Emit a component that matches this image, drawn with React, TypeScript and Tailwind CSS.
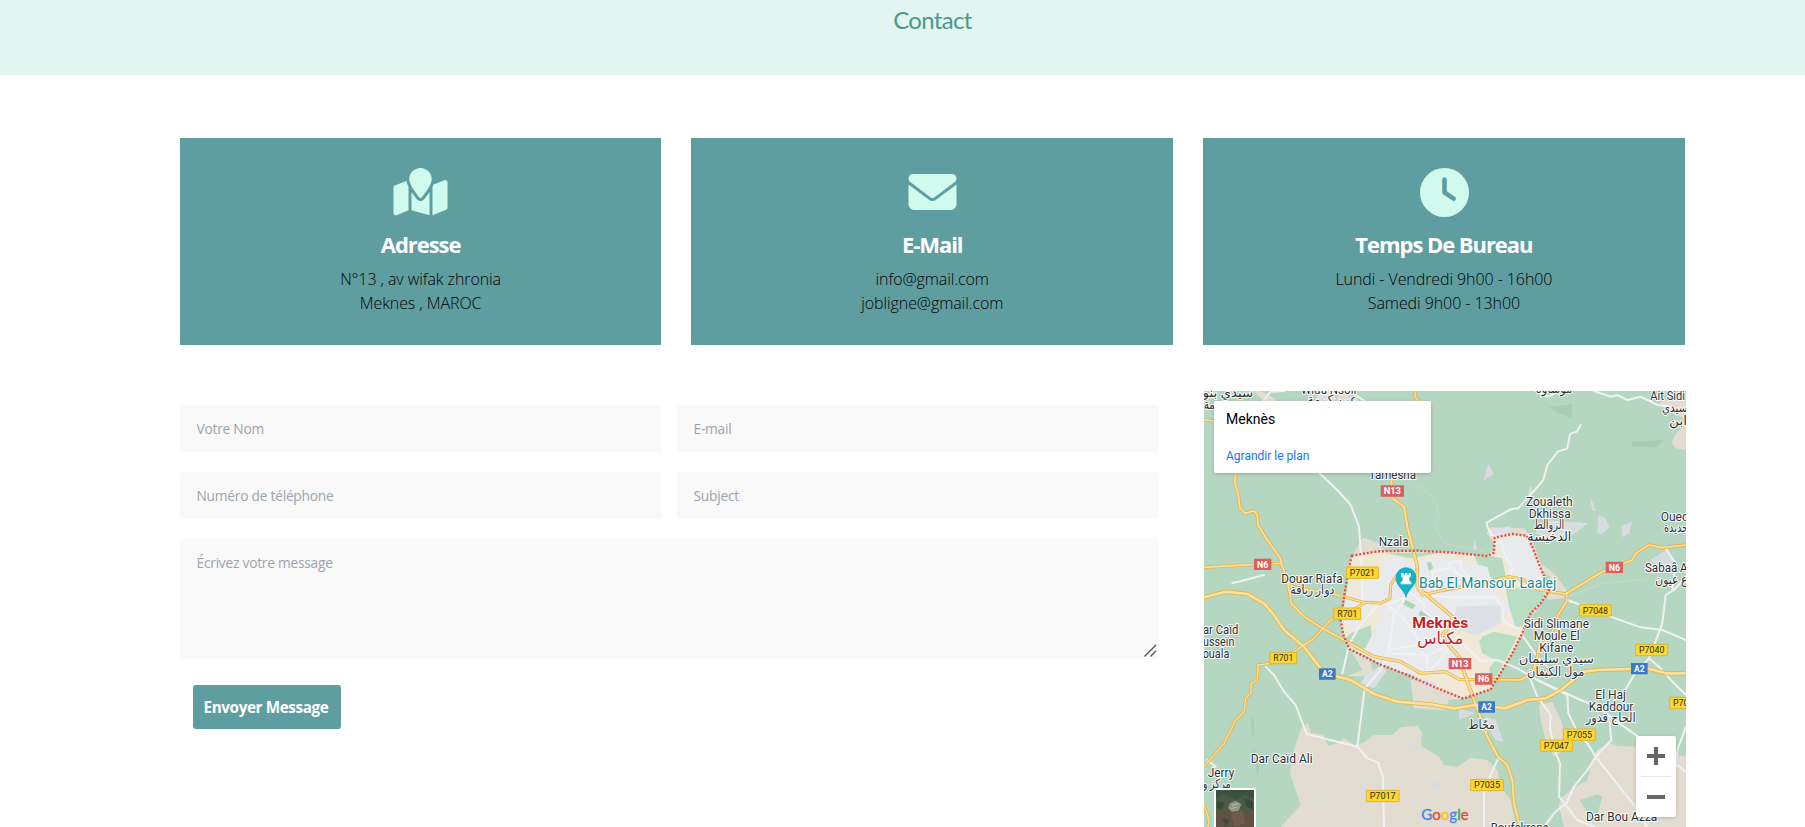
import React from "react";
import { FaMapLocation, FaEnvelope, FaClock } from "react-icons/fa6";

const cards = [
  { icon: FaMapLocation, size: "h-12 w-[55px]", title: "Adresse", lines: ["N°13 , av wifak zhronia", "Meknes , MAROC"] },
  { icon: FaEnvelope, size: "h-12 w-[49px]", title: "E-Mail", lines: ["info@gmail.com", "jobligne@gmail.com"] },
  { icon: FaClock, size: "ml-px h-[49px] w-[49px]", title: "Temps De Bureau", lines: ["Lundi - Vendredi 9h00 - 16h00", "Samedi 9h00 - 13h00"] },
];

/* Terrain patches: fill colour and outline. */
const areas: [string, string][] = [
  ["#e3ddd1", "M230 1311 L290 1245 L258 1150 L270 1080 L292 1012 L312 1000 L320 1028 L358 1035 L374 1068 L398 1060 L420 1045 L450 1065 L478 1058 L510 1035 L565 1035 L590 1012 L640 1007 L653 1025 L652 1068 L705 1100 L720 1125 L760 1130 L800 1103 L850 1110 L880 1140 L890 1190 L920 1230 L935 1311 Z"],
  ["#e3ddd1", "M1080 1311 L1065 1250 L1070 1225 L1100 1200 L1150 1170 L1165 1110 L1180 1080 L1215 1058 L1240 1068 L1300 1070 L1446 1100 L1446 1311 Z"],
  ["#e3ddd1", "M1005 945 L1045 935 L1075 1000 L1085 1075 L1050 1100 L1025 1050 L1012 1000 Z"],
  ["#b5d6c1", "M1128 1230 L1180 1213 L1195 1220 L1180 1275 L1165 1300 L1145 1260 Z"],
  ["#e3ddd1", "M1365 40 L1395 25 L1446 35 L1446 85 L1415 75 Z"],
  ["#e3ddd1", "M1402 160 L1420 125 L1446 105 L1446 180 L1415 175 Z"],
  ["#e3ddd1", "M150 3 L170 3 L210 25 L240 60 L205 60 Z M400 3 L440 3 L440 32 L400 32 Z"],
  ["#dfe0e4", "M355 3 L385 3 L400 32 L330 32 Z"],
  ["#e3ddd1", "M425 540 L470 450 L480 443 L520 458 L550 490 L440 500 Z"],
  ["#e3ddd1", "M848 430 L860 412 L960 415 L985 450 L1010 520 L1055 555 L1088 600 L1080 625 L1030 630 L1040 560 L870 460 Z"],
  ["#e3ddd1", "M440 780 L500 810 L510 860 L430 857 L475 840 Z M620 870 L700 880 L780 925 L735 930 L720 960 L630 955 Z"],
  ["#f0e9d7", "M443 497 L540 485 L720 485 L850 498 L872 475 L872 445 L920 432 L968 438 L1003 515 L1035 602 L970 700 L930 780 L860 898 L778 926 L610 850 L436 777 L410 700 L428 600 Z"],
  ["#b7dbc1", "M545 490 L720 486 L620 505 Z M810 495 L860 498 L895 505 L905 560 L870 575 L830 545 Z M440 730 L500 705 L505 770 L455 780 L425 745 Z"],
  ["#e8eaee", "M430 620 L470 620 L470 560 L530 560 L545 500 L640 515 L700 500 L850 530 L870 600 L925 660 L880 680 L860 720 L740 720 L770 800 L760 850 L600 850 L525 820 L475 790 L540 670 L500 645 L470 690 L450 715 L408 690 Z"],
  ["#e8eaee", "M876 450 L960 438 L985 480 L1020 590 L950 595 L925 560 L900 500 Z M920 660 L940 675 L920 710 Z M953 650 L975 655 L965 700 L955 690 Z"],
  ["#dde0e4", "M855 420 L920 408 L915 430 L870 440 Z M760 650 L890 645 L890 700 L820 735 L740 715 Z M490 850 L525 830 L550 840 L510 895 L470 880 Z M630 860 L700 880 L680 900 Z"],
  ["#b8dfc3", "M905 595 L1000 590 L1025 615 L990 660 L980 710 L935 710 L915 650 Z M835 740 L870 725 L940 740 L910 800 L865 880 L855 835 L875 810 L835 790 L825 755 Z"],
  ["#a9d8b7", "M668 518 L680 515 L688 535 L675 543 Z M605 630 L635 645 L625 658 L598 643 Z M650 662 L675 672 L670 685 L643 675 Z M730 755 L750 760 L735 775 Z"],
  ["#d7dce1", "M853 222 L871 252 L838 272 Z M978 287 L987 305 L972 320 Z M1158 320 L1178 362 L1165 363 Z M1182 377 L1203 383 L1216 412 L1195 433 L1180 430 Z M1252 408 L1284 396 L1276 430 L1254 442 Z M1030 390 L1152 400 L1100 440 L1050 450 L990 430 Z M813 450 L820 478 L804 482 Z M1338 510 L1385 480 L1430 530 L1390 550 Z M765 955 L815 970 L765 990 Z M845 980 L875 990 L898 1055 L875 1050 L850 1010 Z M610 1055 L665 1080 L635 1085 Z M665 1165 L708 1180 L700 1205 Z"],
  ["#a8cdb7", "M1035 52 L1105 42 L1102 83 L1065 70 Z M1282 155 L1380 150 L1358 172 L1284 170 Z M140 985 L150 990 L148 1050 Z M150 1075 L170 1110 L160 1160 Z"],
];

const whiteRoads = [
  "M345 248 L400 300 L440 345 L465 410 L474 540 L475 640",
  "M985 308 L942 355 L920 358 L848 398 L850 410 L862 433 L890 450 L905 500 L925 530 L920 570",
  "M985 308 L1018 270 L1030 225 L1062 185 L1090 175 L1098 132 L1118 125 L1130 105",
  "M995 3 L1030 20 L1060 8 M1170 3 L1220 20 L1240 15 L1270 30 L1310 20 L1360 45 L1400 50",
  "M185 830 L210 855 L240 905 L275 945 L308 1032 L460 1070 L490 1105 L522 1118 L537 1160 L540 1311",
  "M460 1070 L482 895 L530 840 L550 785 L570 680 L605 620",
  "M415 850 L435 765 L465 710 L520 645",
  "M605 620 L560 640 L520 645 M570 655 L555 790 L670 795 L740 765 M540 640 L595 680 L640 740 L640 765 L555 780",
  "M610 600 L640 625 L660 640 L660 665 L740 720 L785 770 L830 812 L880 810 L940 835 L1000 870 L1130 930 L1180 950",
  "M650 615 L720 620 L870 620 L895 650 L900 695 L940 715 L1000 800 L1040 840",
  "M688 565 L685 545 L735 535 L735 520 L770 512 L770 535 L800 565 L770 580 L735 560 M735 520 L760 550 L800 570",
  "M690 565 L660 600 M740 765 L700 820 L670 845 L670 795",
  "M1000 870 L1090 915 L1093 970 L1120 1025 L1150 1060 L1175 1100 L1230 1170 L1290 1245 L1330 1311",
  "M980 870 L1000 920 L1040 975 L1038 1015 L1052 1080 L1068 1120 L1065 1220 L1085 1245 L1120 1290 L1170 1311",
  "M1085 1245 L1110 1190 L1150 1140 L1180 1095 L1222 1050 L1215 975 L1180 950",
  "M1020 1311 L1050 1270 L1085 1240 M1215 975 L1260 1010 L1310 1045 L1446 1145",
  "M1090 630 L1130 645 L1220 680 L1310 712 L1375 720 L1446 750",
  "M1446 560 L1410 600 L1385 615 L1375 700 L1335 805 L1290 855 L1245 930",
  "M1335 805 L1370 835 L1410 880 L1446 915 M1385 475 L1415 520 L1405 600",
  "M885 1100 L862 1150 L840 1210 L840 1311",
  "M10 1110 L35 1130 M85 580 L180 555 M1446 1010 L1420 1080 L1415 1130",
  "M180 30 L200 5 L240 3 M390 10 L450 12 L480 32",
];

const faintRoads = [
  "M620 275 L675 310 L700 350 L705 385 L690 400 L700 425 L720 460 L840 485",
  "M1090 620 L1200 580 L1320 568",
];

const yellowRoads: [string, number][] = [
  ["M0 90 L30 93", 9],
  ["M635 3 L632 20 L645 33", 9],
  ["M95 248 L92 275 L103 315 L108 355 L125 370 L150 362 L160 375 L162 405 L190 450 L228 503 L235 530 L250 570 L262 640 L300 680 L350 712 L420 750 L510 800 L590 815 L650 850 L725 845 L765 868 L950 870 L985 850 L1000 800 L1005 770 L1040 740 L1065 670 L1088 635 L1088 608", 10],
  ["M0 532 L150 523 L232 520", 10],
  ["M238 572 L270 592 L400 615 L480 637 L530 640 L558 625 L560 585 L575 560 L620 555 L640 565", 9],
  ["M562 268 L565 325 L600 350 L610 410 L625 470 L640 530 L640 590 L680 625 L745 680 L740 705 L715 735 L725 755 L765 800 L790 875 L825 970 L850 1040 L882 1100 L910 1125 L925 1170 L930 1240 L948 1311", 11],
  ["M0 622 L65 605 L130 612 L180 640 L210 675 L240 720 L300 770 L350 835 L400 860 L440 870 L510 912 L580 935 L680 943 L750 955 L815 945 L905 955 L970 930 L1025 925 L1070 900 L1140 845 L1180 840 L1330 835 L1385 850 L1446 850", 13],
  ["M480 640 L440 665 L380 690 L330 745 L270 785 L200 820 L162 825 L160 870 L142 880 L140 910 L125 925 L120 965 L95 990 L60 1060 L0 1130", 9],
  ["M640 590 L655 615 L720 600 L860 575 L915 560 L960 570 L1000 598 L1085 612 L1195 545 L1260 520 L1285 510 L1295 490 L1335 465 L1375 473 L1446 465", 10],
  ["M0 1243 L15 1290 L12 1311", 9],
];

type Kind = "yellow" | "red" | "blue";
const shields: [string, number, number, number, Kind][] = [
  ["N13", 565, 303, 70, "red"],
  ["N6", 176, 523, 52, "red"],
  ["N6", 1231, 532, 52, "red"],
  ["N13", 768, 821, 68, "red"],
  ["N6", 839, 867, 52, "red"],
  ["P7021", 475, 548, 96, "yellow"],
  ["R701", 430, 671, 80, "yellow"],
  ["R701", 238, 804, 80, "yellow"],
  ["P7048", 1174, 661, 96, "yellow"],
  ["P7040", 1343, 780, 96, "yellow"],
  ["P7055", 1126, 1034, 96, "yellow"],
  ["P7047", 1057, 1067, 96, "yellow"],
  ["P7035", 849, 1185, 98, "yellow"],
  ["P7017", 536, 1218, 98, "yellow"],
  ["P7049", 1445, 939, 96, "yellow"],
  ["A2", 370, 852, 50, "blue"],
  ["A2", 1306, 836, 50, "blue"],
  ["A2", 848, 951, 50, "blue"],
];
const fills: Record<Kind, string> = { yellow: "#fdd835", red: "#db5f5f", blue: "#3c78c8" };

/* Place names: text, centre x, baseline y, drawn width. */
const places: [string, number, number, number][] = [
  ["Wida Nsoli", 374, 12, 166],
  ["عين كرمة", 385, 42, 150],
  ["سيدي بنور", 62, 20, 172],
  ["مة", 16, 56, 34],
  ["موساوة", 1050, 10, 110],
  ["Ait Sidi", 1391, 29, 104],
  ["سيدي", 1412, 66, 76],
  ["ابن", 1422, 104, 54],
  ["Tamesna", 565, 268, 142],
  ["Nzala", 569, 468, 90],
  ["Douar Riafa", 324, 578, 184],
  ["دوار ريافة", 325, 613, 132],
  ["Zoualeth", 1036, 348, 140],
  ["Dkhissa", 1037, 384, 126],
  ["الزوالط", 1035, 418, 92],
  ["الدخيسة", 1036, 454, 132],
  ["Oued", 1412, 392, 84],
  ["جديدة", 1416, 426, 72],
  ["Sabaâ A", 1387, 546, 128],
  ["ع عيون", 1402, 582, 96],
  ["Sidi Slimane", 1057, 714, 196],
  ["Moule El", 1058, 750, 138],
  ["Kifane", 1057, 786, 102],
  ["سيدي سليمان", 1057, 820, 226],
  ["مول الكيفان", 1055, 857, 172],
  ["El Haj", 1220, 928, 92],
  ["Kaddour", 1221, 963, 134],
  ["الحاج قدور", 1220, 996, 150],
  ["مجّاط", 833, 1018, 80],
  ["Dar Caïd Ali", 233, 1119, 186],
  ["ar Caïd", 50, 732, 106],
  ["usseïn", 44, 768, 94],
  ["ouala", 36, 804, 80],
  ["Jerry", 51, 1160, 80],
  ["مركز و", 38, 1194, 84],
  ["Dar Bou Azza", 1253, 1294, 214],
  ["Boufekrane", 947, 1326, 174],
];

const google: [string, string][] = [["G", "#4285f4"], ["o", "#ea4335"], ["o", "#fbbc04"], ["g", "#4285f4"], ["l", "#34a853"], ["e", "#ea4335"]];

function MapArtwork() {
  return (
    <svg viewBox="0 3 1446 1308" className="block h-[436px] w-[482px]" fontFamily="Roboto, 'DejaVu Sans', sans-serif">
      <rect y="3" width="1446" height="1308" fill="#b5d6c1" />
      {areas.map(([fill, d]) => <path key={d} d={d} fill={fill} />)}
      <g fill="none" strokeLinejoin="round" strokeLinecap="round">
        {faintRoads.map((d) => <path key={d} d={d} stroke="#c9d9d2" strokeWidth="3" />)}
        {whiteRoads.map((d) => <path key={d} d={d} stroke="#eff1f3" strokeWidth="6" />)}
        {yellowRoads.map(([d, w]) => <path key={d} d={d} stroke="#e8b443" strokeWidth={w} />)}
        {yellowRoads.map(([d, w]) => <path key={d} d={d} stroke="#f8e0a3" strokeWidth={w - 5} />)}
        <path
          d="M443 497 L520 484 L640 482 L735 487 L850 498 L870 488 L872 443 L925 432 L968 437 L985 470 L1003 518 L1025 570 L1035 602 L1010 640 L980 670 L950 740 L925 790 L860 898 L778 926 L700 895 L610 855 L525 822 L436 777 L418 735 L410 690 L418 635 L430 560 Z"
          stroke="#e94b43" strokeWidth="7" strokeDasharray="6 5.5" strokeLinecap="butt"
        />
      </g>
      {shields.map(([label, x, y, w, kind]) => (
        <g key={label + x}>
          <rect x={x - w / 2} y={y - 17} width={w} height="34" rx="1" fill={fills[kind]} stroke={kind === "yellow" ? "#e0b52c" : "none"} strokeWidth="3" />
          <text x={x} y={y + 10} textAnchor="middle" fontSize="28" fontWeight={kind === "yellow" ? 400 : 700} fill={kind === "yellow" ? "#2f2b14" : "#fff"} textLength={kind === "yellow" ? w - 20 : w - 18} lengthAdjust="spacingAndGlyphs">{label}</text>
        </g>
      ))}
      <g fontSize="38" fill="#2b2f33" stroke="#fff" strokeWidth="6" strokeLinejoin="round" paintOrder="stroke" textAnchor="middle">
        {places.map(([name, x, y, w]) => (
          <text key={name} x={x} y={y} textLength={w} lengthAdjust="spacingAndGlyphs">{name}</text>
        ))}
        <text x="851" y="595" fontSize="42" fill="#128a93" textLength="412" lengthAdjust="spacingAndGlyphs">Bab El Mansour Laalej</text>
        <text x="709" y="713" fontSize="44" fontWeight="700" fill="#c5221f" textLength="168" lengthAdjust="spacingAndGlyphs">Meknès</text>
        <text x="709" y="761" fontSize="50" fill="#c5221f" textLength="138" lengthAdjust="spacingAndGlyphs">مكناس</text>
      </g>
      <path d="M606 622 C602 598 576 590 576 563 A30 30 0 0 1 636 563 C636 590 610 598 606 622 Z" fill="#12b5cb" stroke="#0a95a8" strokeWidth="2" />
      <path d="M592 549 h7 v5 h4 v-5 h7 v5 h4 v-5 h7 v10 l-5 4 v9 l6 5 v6 h-32 v-6 l6 -5 v-9 l-5 -4 Z" fill="#fff" />
      <text x="652" y="1289" fontFamily="Lato, sans-serif" fontSize="47" textLength="142" lengthAdjust="spacingAndGlyphs" strokeWidth="1">
        {google.map(([c, fill], i) => <tspan key={i} fill={fill} stroke={fill}>{c}</tspan>)}
      </text>
      <rect x="30" y="1194" width="126" height="130" rx="6" fill="#fff" />
      <rect x="36" y="1200" width="114" height="111" fill="#4b5a47" />
      <path d="M36 1200 H150 V1225 L120 1215 L95 1230 L60 1212 L36 1225 Z" fill="#3b5140" />
      <path d="M36 1265 L70 1255 L100 1275 L150 1260 V1311 H36 Z" fill="#5f5144" />
      <path d="M80 1270 L115 1262 L125 1300 L90 1311 Z" fill="#6e5b4d" />
      <path d="M78 1240 L95 1232 L112 1242 L104 1262 L84 1266 L72 1254 Z" fill="#8d9586" />
      <path d="M120 1225 L148 1235 L146 1258 L128 1250 Z M40 1232 L62 1240 L54 1258 L38 1254 Z M55 1285 L78 1290 L66 1308 Z" fill="#384a38" />
      <path d="M84 1246 L104 1240 M80 1256 L98 1252" stroke="#b9bba9" strokeWidth="3" />
    </svg>
  );
}

function MapPanel() {
  return (
    <div className="relative h-[436px] w-[482px] shrink-0 overflow-hidden font-[Roboto,sans-serif]">
      <MapArtwork />
      <div className="absolute left-[10px] top-[10px] flex h-[72px] w-[217px] flex-col justify-between rounded-[2px] bg-white px-3 pt-[9px] pb-[8px] shadow-[0_1px_4px_-1px_rgba(0,0,0,0.3)]">
        <span className="text-[14px] leading-[18px] text-black">Meknès</span>
        <a className="text-[12px] leading-[17px] text-[#1a73e8]">Agrandir le plan</a>
      </div>
      <div className="absolute left-[432px] top-[345px] flex h-[81px] w-10 flex-col items-center rounded-[2px] bg-white shadow-[0_1px_4px_-1px_rgba(0,0,0,0.3)]">
        <svg viewBox="0 0 40 40" className="h-10 w-10"><path d="M18 11h4v7h7v4h-7v7h-4v-7h-7v-4h7z" fill="#666" /></svg>
        <div className="h-px w-[30px] bg-[#e6e6e6]" />
        <svg viewBox="0 0 40 40" className="h-10 w-10"><path d="M11 18h18v4H11z" fill="#666" /></svg>
      </div>
    </div>
  );
}

const field = "block h-[47px] w-[482px] rounded-[4px] bg-[#f9f9f9] px-[16.5px] pb-px text-[13.75px] tracking-[-0.24px] placeholder:text-[#9ca3af] outline-none";

export default function App() {
  return (
    <div className="h-[827px] w-full overflow-hidden bg-white font-['Open_Sans',sans-serif]">
      <header className="flex h-[75px] justify-center bg-[#e2f5f0] pl-[60px] pt-[5px]">
        <h1 className="font-[Lato,sans-serif] text-[24px] leading-[29px] tracking-[-0.65px] text-[#4a9a87]">Contact</h1>
      </header>
      <main className="pl-[180px] pr-[120px] pt-[63px]">
        <section className="-ml-[0.25px] mr-[0.25px] grid grid-cols-3 gap-[30px]">
          {cards.map(({ icon: Icon, size, title, lines }) => (
            <article key={title} className="flex h-[207px] flex-col items-center bg-[#5f9ea0] pt-[30px]">
              <div className="flex h-12 items-center">
                <Icon className={`${size} text-[#d1faee]`} />
              </div>
              <h2 className="mt-3 text-[22px] font-bold leading-8 tracking-[-1.05px] text-white">{title}</h2>
              <p className="mt-[7px] text-center text-[16px] font-light leading-6 tracking-[-0.08px] text-black">
                {lines[0]}
                <br />
                {lines[1]}
              </p>
            </article>
          ))}
        </section>
        <section className="mt-[46px] flex justify-between">
          <form className="w-[979px] pt-[14px]">
            <div className="grid grid-cols-2 gap-x-[15px] gap-y-5">
              <input className={field} placeholder="Votre Nom" />
              <input className={field} placeholder="E-mail" />
              <input className={field} placeholder="Numéro de téléphone" />
              <input className={field} placeholder="Subject" />
            </div>
            <div className="relative mt-5">
              <textarea className="block h-[120px] w-full resize-none rounded-[4px] bg-[#f9f9f9] px-[16.5px] py-[13px] text-[13.75px] leading-[21px] tracking-[-0.24px] outline-none placeholder:text-[#9ca3af]" placeholder="Écrivez votre message" />
              <svg viewBox="0 0 13 13" className="absolute bottom-[2px] right-[2px] h-[13px] w-[13px]" fill="none" stroke="#555" strokeWidth="1.4">
                <path d="M0.5 12.5L12 1M6.5 12.5L12 7" />
              </svg>
            </div>
            <button type="button" className="ml-[13px] mt-[26px] h-11 w-[148px] whitespace-nowrap rounded-[3px] bg-[#5f9ea0] pr-[2px] pt-px text-[15.25px] font-bold tracking-[-0.38px] text-white">Envoyer Message</button>
          </form>
          <div className="-mr-px">
            <MapPanel />
          </div>
        </section>
      </main>
    </div>
  );
}
